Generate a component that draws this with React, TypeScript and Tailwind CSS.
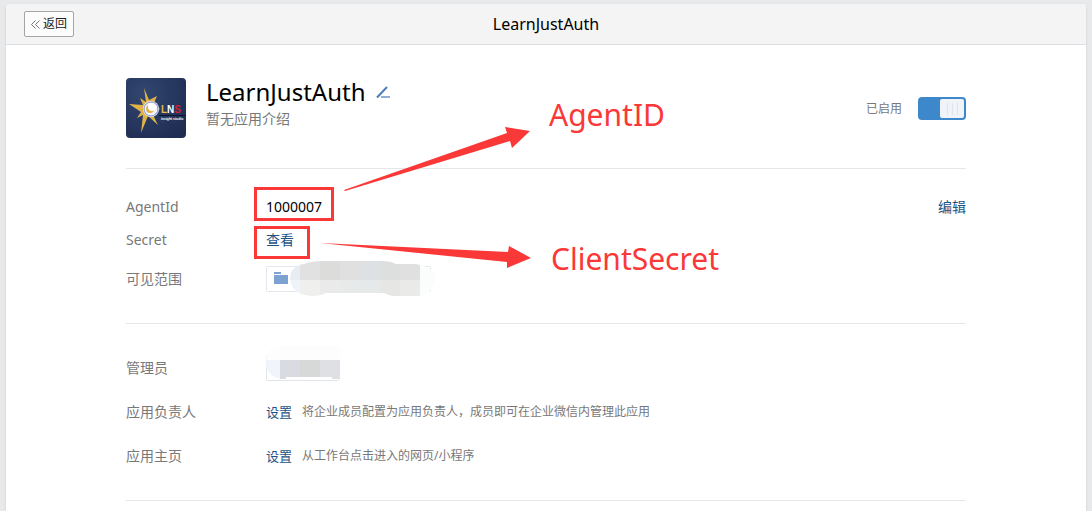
import type { ReactNode } from "react";

const MOSAIC_TOP = ["#e1e1e1", "#dcdcda", "#dfe0df", "#dee1e4", "#dddfdf", "#e0e0e0"];
const MOSAIC_BOTTOM = ["#efefed", "#e9eae9", "#e8e9e9", "#e5e9e9", "#e6e6e5", "#eaeae9"];

function AppLogo() {
  return (
    <svg viewBox="0 0 60 60" className="size-[60px] shrink-0 rounded" role="img" aria-label="LNS insight studio">
      <defs>
        <radialGradient id="logo-sky" cx="0.3" cy="0.25" r="0.9">
          <stop offset="0" stopColor="#31466f" />
          <stop offset="1" stopColor="#1f2c52" />
        </radialGradient>
      </defs>
      <rect width="60" height="60" fill="url(#logo-sky)" />
      <path
        d="M18 10 L23 22 L31 18 L28 25 L34 31 L27 37 L32 47 L22 38 L15 55 L17 37 L11 40 L15 34 L3 26 L17 27 L14 20 L20 24 Z"
        fill="#dfb347"
      />
      <circle cx="25" cy="31" r="8" fill="#f3f3fa" />
      <circle cx="25" cy="31" r="7" fill="none" stroke="#7f90cc" />
      <circle cx="24" cy="31" r="4" fill="#dfb347" />
      <circle cx="26" cy="29" r="4" fill="#fff" />
      <text x="35" y="35" fontFamily="Liberation Sans, sans-serif" fontSize="10" fontWeight="700">
        <tspan fill="#e6bc48">L</tspan>
        <tspan fill="#fff">N</tspan>
        <tspan fill="#d3222e">S</tspan>
      </text>
      <path d="M33 37.500 H60" stroke="#0c1530" />
      <text x="35" y="42" fontFamily="Liberation Sans, sans-serif" fontSize="3.400" fontWeight="700" fill="#fff">
        insight studio
      </text>
    </svg>
  );
}

function EditIcon() {
  return (
    <svg viewBox="0 0 14 13" className="h-[13px] w-[14px]" aria-hidden="true">
      <path d="M1 11.500 L11 1" stroke="#4c7db5" strokeWidth="2" fill="none" />
      <path d="M5 11 H14" stroke="#8fb0d6" strokeWidth="2" />
    </svg>
  );
}

function ScopeMosaic() {
  return (
    <svg viewBox="0 0 170 38" className="h-[38px] w-[170px]" aria-hidden="true">
      <rect x="0.500" y="6.500" width="164" height="25" rx="1" fill="#fff" stroke="#e3e6ec" />
      <path d="M8 12 H15 V14 H8 Z M8 15 H22 V24 H8 Z" fill="#7da2d2" />
      <defs>
        <clipPath id="scope-blob">
          <path d="M24 19 Q24 6 38 4 Q46 1 56 1 H116 Q124 1 130 4 H150 Q169 7 169 19 Q168 32 154 36 H126 L118 33 H60 Q54 36 46 36 Q26 35 24 19 Z" />
        </clipPath>
      </defs>
      <g clipPath="url(#scope-blob)" shapeRendering="crispEdges">
        <rect x="20" width="14" height="20" fill="#e8edf4" />
        <rect x="20" y="20" width="14" height="20" fill="#eef3f9" />
        {MOSAIC_TOP.map((fill, i) => (
          <rect key={i} x={34 + i * 20} width="20" height="20" fill={fill} />
        ))}
        {MOSAIC_BOTTOM.map((fill, i) => (
          <rect key={i} x={34 + i * 20} y="20" width="20" height="20" fill={fill} />
        ))}
        <rect x="154" width="16" height="40" fill="#fbfcfc" />
      </g>
    </svg>
  );
}

function AdminMosaic() {
  return (
    <svg viewBox="0 0 76 44" className="h-11 w-[76px]" aria-hidden="true">
      <rect x="0.500" y="9.500" width="72" height="25" rx="1" fill="#fff" stroke="#e1e4ea" />
      <path d="M0 14 Q2 0 14 0 H74 V14 Z" fill="#fdfdfd" />
      <path d="M0 14 H14 V33 Q2 30 0 20 Z" fill="#f1f4fa" />
      <g shapeRendering="crispEdges">
        <path d="M14 14 H34 V31 H20 V33 H14 Z" fill="#dadbe1" />
        <path d="M34 14 H54 V31 H34 Z" fill="#d7d9d8" />
        <path d="M54 14 H74 V33 H66 V31 H54 Z" fill="#dfe0e3" />
      </g>
    </svg>
  );
}

function Row({ label, className, children }: { label: string; className: string; children: ReactNode }) {
  return (
    <div className={`flex items-center ${className}`}>
      <dt className="w-[140px] shrink-0 text-[#787878]">{label}</dt>
      <dd className="flex flex-1 items-center">{children}</dd>
    </div>
  );
}

function Setting({ hint }: { hint: string }) {
  return (
    <>
      <a href="#" className="text-[13px] text-[#1d5285]">
        设置
      </a>
      <span className="ml-[10px] text-xs text-[#787878]">{hint}</span>
    </>
  );
}

export default function App() {
  return (
    <div className="min-h-screen bg-[#e8e9eb] px-1.5 pt-1 font-['Noto_Sans','Noto_Sans_CJK_SC',sans-serif] text-sm leading-5 text-black">
      <div className="min-h-[calc(100vh-4px)] rounded-t bg-white shadow-sm">
        <header className="grid h-[41px] grid-cols-[1fr_auto_1fr] items-center rounded-t border-b border-[#dcdfe3] bg-[#f4f4f4] px-[18px]">
          <button className="flex h-[26px] w-[50px] items-center justify-center gap-[3px] rounded-xs border border-[#a5a5a5] bg-[#fcfcfc] text-xs text-[#222]">
            <svg viewBox="0 0 9 9" className="size-[9px]" fill="none" stroke="#777" aria-hidden="true">
              <path d="M4.500 0.500 L0.500 4.500 L4.500 8.500 M8.500 0.500 L4.500 4.500 L8.500 8.500" />
            </svg>
            返回
          </button>
          <h1 className="text-base">LearnJustAuth</h1>
        </header>

        <main className="relative px-[120px]">
          <section className="flex items-start border-b border-[#e4e6e9] pt-[33px] pb-[30px]">
            <AppLogo />
            <div className="ml-5 flex-1">
              <h2 className="flex items-center gap-[10px] text-2xl leading-7">
                LearnJustAuth
                <button aria-label="编辑名称">
                  <EditIcon />
                </button>
              </h2>
              <p className="mt-[3px] text-[#787878]">暂无应用介绍</p>
            </div>
            <label className="mt-[19px] flex items-center gap-4 text-xs text-[#787878]">
              已启用
              <input type="checkbox" defaultChecked className="peer sr-only" />
              <span className="flex h-[23px] w-12 justify-end rounded bg-[#3d88cb] p-0.5">
                <span className="flex w-6 items-center justify-center gap-1 rounded-xs bg-[#f0f3f8]">
                  <span className="h-3 w-px bg-[#dfe3ea]" />
                  <span className="h-3 w-px bg-[#dfe3ea]" />
                  <span className="h-3 w-px bg-[#dfe3ea]" />
                </span>
              </span>
            </label>
          </section>

          <dl className="border-b border-[#e4e6e9] py-[21px]">
            <Row label="AgentId" className="h-[34px]">
              <span className="relative">
                1000007
                <span className="absolute -inset-x-3 -top-[10px] -bottom-1 border-3 border-[#fa3838]" />
              </span>
              <a href="#" className="ml-auto text-[#1d5285]">
                编辑
              </a>
            </Row>
            <Row label="Secret" className="h-8">
              <a href="#" className="relative text-[#1d5285]">
                查看
                <span className="absolute -top-1 -right-4 -bottom-[9px] -left-3 border-3 border-[#fa3838]" />
              </a>
            </Row>
            <Row label="可见范围" className="h-[46px]">
              <ScopeMosaic />
            </Row>
          </dl>

          <dl className="border-b border-[#e4e6e9] py-[22px]">
            <Row label="管理员" className="h-11">
              <AdminMosaic />
            </Row>
            <Row label="应用负责人" className="h-11">
              <Setting hint="将企业成员配置为应用负责人，成员即可在企业微信内管理此应用" />
            </Row>
            <Row label="应用主页" className="h-11">
              <Setting hint="从工作台点击进入的网页/小程序" />
            </Row>
          </dl>

          {/* red callouts drawn over the form */}
          <svg
            viewBox="0 0 240 150"
            className="pointer-events-none absolute top-[75px] left-[304px] h-[150px] w-[240px]"
            fill="#fa3838"
            aria-hidden="true"
          >
            <path d="M34 70 L197 13 L195 7 L220 11 L202 28 L200 21 L35 71 Z" />
            <path d="M10 123 L198 132 L199 126 L221 138 L197 148 L197 142 Z" />
          </svg>
          <span className="absolute top-[50px] left-[543px] text-3xl leading-10 text-[#fa3838]">AgentID</span>
          <span className="absolute top-[194px] left-[545px] text-3xl leading-10 text-[#fa3838]">ClientSecret</span>
        </main>
      </div>
    </div>
  );
}
